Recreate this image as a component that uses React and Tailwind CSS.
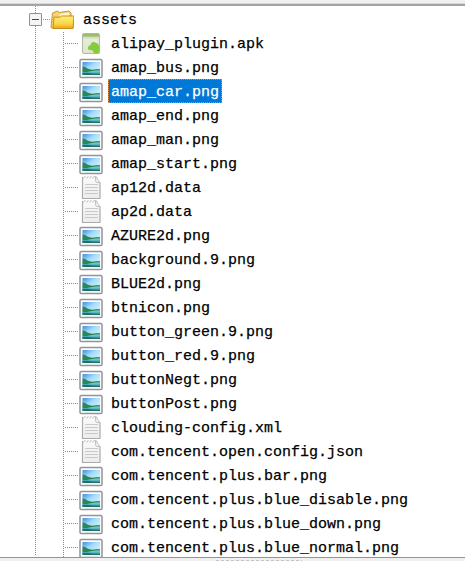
import React from "react";

const files = [
  ["apk", "alipay_plugin.apk"],
  ["img", "amap_bus.png"],
  ["img", "amap_car.png"],
  ["img", "amap_end.png"],
  ["img", "amap_man.png"],
  ["img", "amap_start.png"],
  ["doc", "ap12d.data"],
  ["doc", "ap2d.data"],
  ["img", "AZURE2d.png"],
  ["img", "background.9.png"],
  ["img", "BLUE2d.png"],
  ["img", "btnicon.png"],
  ["img", "button_green.9.png"],
  ["img", "button_red.9.png"],
  ["img", "buttonNegt.png"],
  ["img", "buttonPost.png"],
  ["doc", "clouding-config.xml"],
  ["doc", "com.tencent.open.config.json"],
  ["img", "com.tencent.plus.bar.png"],
  ["img", "com.tencent.plus.blue_disable.png"],
  ["img", "com.tencent.plus.blue_down.png"],
  ["img", "com.tencent.plus.blue_normal.png"],
];

function Gradients() {
  return (
    <svg className="absolute size-0" aria-hidden="true">
      <defs>
        <linearGradient id="sky" x1="0" y1="0" x2="1" y2="1">
          <stop offset="0" stopColor="#3f8de0" />
          <stop offset=".4" stopColor="#a4dcfa" />
          <stop offset="1" stopColor="#e8fcff" />
        </linearGradient>
        <linearGradient id="lake" x1="0" y1="0" x2="0" y2="1">
          <stop offset="0" stopColor="#8adbe0" />
          <stop offset=".5" stopColor="#55b5c9" />
          <stop offset="1" stopColor="#1f6a8c" />
        </linearGradient>
        <linearGradient id="gold" x1="0" y1="0" x2="0" y2="1">
          <stop offset="0" stopColor="#ffef7c" />
          <stop offset=".6" stopColor="#fbd848" />
          <stop offset="1" stopColor="#e9a41a" />
        </linearGradient>
        <linearGradient id="apk" x1="0" y1="0" x2="0" y2="1">
          <stop offset="0" stopColor="#a9c47e" />
          <stop offset=".3" stopColor="#e6eddb" />
          <stop offset="1" stopColor="#dbe5cd" />
        </linearGradient>
        <linearGradient id="paper" x1="0" y1="0" x2="0" y2="1">
          <stop offset="0" stopColor="#fafafa" />
          <stop offset="1" stopColor="#ececec" />
        </linearGradient>
      </defs>
    </svg>
  );
}

function ImageIcon() {
  return (
    <svg viewBox="0 0 24 24" className="size-6 shrink-0">
      <rect x="1" y="3.5" width="22" height="18" rx="1.3" fill="#fdfdfd" stroke="#929497" strokeWidth="1.5" />
      <rect x="3.5" y="6" width="17.5" height="13" fill="url(#sky)" />
      <path d="M3.5 14H21v5H3.5z" fill="url(#lake)" />
      <path d="M3.5 10.500l2.500.5 3 1.800 4 1 4-.6 4-.3v1.400l-8 .7-5 1-4.500 .5z" fill="#2d8657" />
      <path d="M3.500 17.300l5-.6 5 1 7.500 .3v1H3.500z" fill="#1d7263" />
    </svg>
  );
}

function DocIcon() {
  return (
    <svg viewBox="0 0 24 24" className="size-6 shrink-0 overflow-visible">
      <path d="M3.500 1H17l4 5v16.500H3.500z" fill="url(#paper)" />
      <path d="M3.500 1v21.500h17.500V6.500" fill="none" stroke="#ababab" strokeWidth="1.200" />
      <path d="M16.500 0l.3 5.800 4.200 1.200z" fill="#fff" stroke="#bdbdbd" />
      <path d="M4.500 2.500L6.500 0M7.500 2.500L9.500 0M10.500 2.500L12.500 0M13.500 2.500L15.500 0" stroke="#b9b9b9" />
      <path d="M6 8.500h13M6 11.500h13M6 14.500h13M6 17.500h13" stroke="#c9c9c9" />
    </svg>
  );
}

function ApkIcon() {
  return (
    <svg viewBox="0 0 24 24" className="size-6 shrink-0">
      <rect x="3.500" y="1.500" width="17" height="20" rx="1.500" fill="url(#apk)" stroke="#b0b9a4" />
      <path d="M4 2h16v2.500H4z" fill="#9cbd6c" />
      <path d="M9 17.500c-.5-3 1-4 2.500-4.500.5-2.500 2.500-3.500 4.500-2.500 2 .3 3.500 1.500 4 3V21h-5l-1.500-2.500z" fill="#86cb3c" />
    </svg>
  );
}

function FolderIcon() {
  return (
    <svg viewBox="0 0 24 24" className="size-6 shrink-0">
      <path d="M1 19.500L2.500 5l5-2 2 1.500L19 3l2 2v3l3 1-1 11H2z" fill="#f7d273" stroke="#cf932a" strokeLinejoin="round" />
      <path d="M10 6l9-1.500.5 4H9z" fill="#fff6d2" />
      <path d="M4 9l6 .3 1.500-1.300H24l-1 12.500H3z" fill="url(#gold)" stroke="#c98c1c" strokeLinejoin="round" />
    </svg>
  );
}

const icons = { img: ImageIcon, doc: DocIcon, apk: ApkIcon };

export default function App() {
  return (
    <div className="flex h-[561px] w-[465px] flex-col overflow-hidden bg-[#f0f0f0] font-['Liberation_Mono',monospace] text-[15px] leading-[18px] text-black [-webkit-text-stroke:0.25px]">
      <Gradients />
      <div className="h-[4px] shrink-0 border-b border-[#d8d8d8]" />
      <div className="flex h-[554px] shrink-0 overflow-hidden border-t-2 border-b border-t-[#a4a4a4] border-b-[#949494] bg-white">
        <div className="flex w-[50px] shrink-0 flex-col">
          <div className="ml-[35px] h-[7px] w-px shrink-0 bg-[repeating-linear-gradient(to_bottom,#888_0_1px,transparent_1px_2px)]" />
          <div className="ml-[29px] flex h-[13px] items-center">
            <span className="flex size-[13px] shrink-0 items-center justify-center rounded-[1px] border border-[#919191] bg-[#f5f5f5]">
              <span className="h-px w-[7px] bg-[#344b80]" />
            </span>
            <span className="ml-px h-px w-[7px] bg-[repeating-linear-gradient(to_right,#888_0_1px,transparent_1px_2px)]" />
          </div>
          <div className="mb-[2px] ml-[35px] w-px grow bg-[repeating-linear-gradient(to_bottom,#888_0_1px,transparent_1px_2px)]" />
        </div>
        <div className="flex grow flex-col pt-[2px]">
          <div className="flex h-6 shrink-0 items-center">
            <FolderIcon />
            <span className="ml-[9px] pt-[2px]">assets</span>
          </div>
          <div className="flex">
            <div className="mb-[3px] ml-[13px] w-px shrink-0 bg-[repeating-linear-gradient(to_bottom,#888_0_1px,transparent_1px_2px)]" />
            <ul>
              {files.map(([kind, name]) => {
                const Icon = icons[kind];
                return (
                  <li key={name} className="flex h-6 items-center">
                    <span className="mb-px h-px w-[15px] bg-[repeating-linear-gradient(to_right,transparent_0_1px,#888_1px_2px)]" />
                    <Icon />
                    <span
                      className={
                        name === "amap_car.png"
                          ? "-mt-[2px] ml-[5px] h-6 whitespace-nowrap border border-dotted border-[#e08a3c] bg-[#0078d7] px-[2px] pt-[4px] text-white"
                          : "ml-[8px] whitespace-nowrap pt-[2px]"
                      }
                    >
                      {name}
                    </span>
                  </li>
                );
              })}
            </ul>
          </div>
        </div>
      </div>
      <div className="ml-[216px] mt-[2px] h-px w-[86px] shrink-0 bg-[repeating-linear-gradient(to_right,#c4c4c4_0_3px,transparent_3px_5px)]" />
    </div>
  );
}
